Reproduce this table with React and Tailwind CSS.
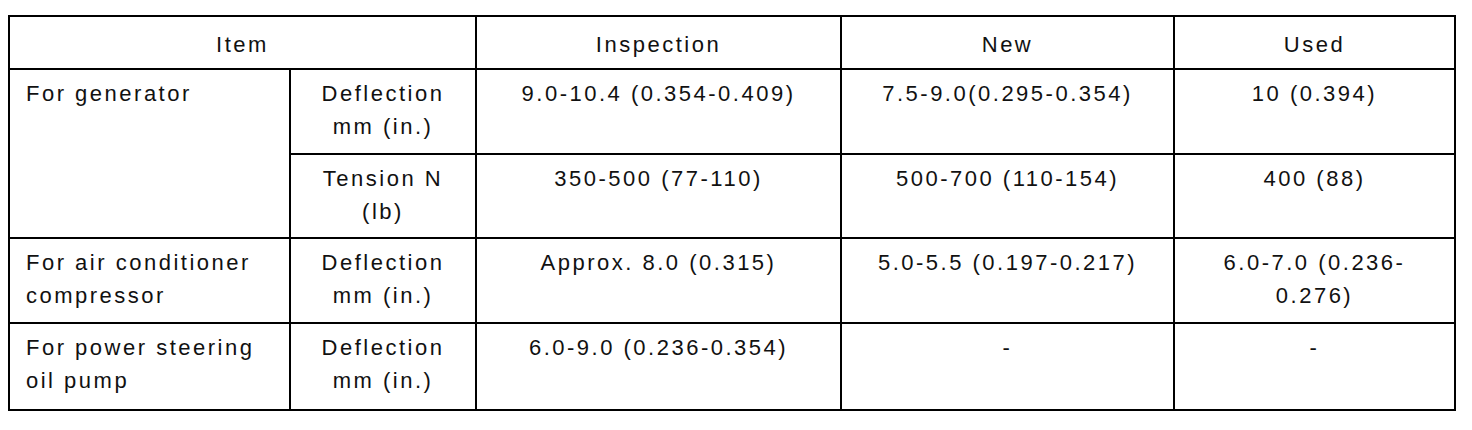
import React from "react";

const rows = [
  {
    item: "For generator",
    span: 2,
    sub: ["Deflection", "mm (in.)"],
    inspection: "9.0-10.4 (0.354-0.409)",
    fresh: "7.5-9.0(0.295-0.354)",
    used: ["10 (0.394)"],
    h: "h-[85px]",
  },
  {
    sub: ["Tension N", "(lb)"],
    inspection: "350-500 (77-110)",
    fresh: "500-700 (110-154)",
    used: ["400 (88)"],
    h: "h-[84px]",
  },
  {
    item: ["For air conditioner", "compressor"],
    sub: ["Deflection", "mm (in.)"],
    inspection: "Approx. 8.0 (0.315)",
    fresh: "5.0-5.5 (0.197-0.217)",
    used: ["6.0-7.0 (0.236-", "0.276)"],
    h: "h-[85px]",
  },
  {
    item: ["For power steering", "oil pump"],
    sub: ["Deflection", "mm (in.)"],
    inspection: "6.0-9.0 (0.236-0.354)",
    fresh: "-",
    used: ["-"],
    h: "h-[87px]",
  },
];

const lines = (arr) =>
  (Array.isArray(arr) ? arr : [arr]).map((t, i) => <div key={i}>{t}</div>);

const cell = "border-2 border-black align-top pt-[7px]";

export default function App() {
  return (
    <div className="w-[1472px] h-[430px] bg-white pl-[8px] pt-[15px] font-['Liberation_Sans',Arial,sans-serif] text-[22px] leading-[33px] tracking-[2.5px] text-[#111]">
      <table className="table-fixed w-[1446px] border-collapse border-2 border-black">
        <colgroup>
          <col className="w-[281px]" />
          <col className="w-[186px]" />
          <col className="w-[365px]" />
          <col className="w-[333px]" />
          <col className="w-[281px]" />
        </colgroup>
        <thead>
          <tr className="h-[53px]">
            <th colSpan={2} className="border-2 border-black align-top pt-[11px] font-normal text-center">Item</th>
            <th className="border-2 border-black align-top pt-[11px] font-normal text-center">Inspection</th>
            <th className="border-2 border-black align-top pt-[11px] font-normal text-center">New</th>
            <th className="border-2 border-black align-top pt-[11px] font-normal text-center">Used</th>
          </tr>
        </thead>
        <tbody>
          {rows.map((r, i) => (
            <tr key={i} className={r.h}>
              {r.item && (
                <td rowSpan={r.span || 1} className={`${cell} pl-[16px] text-left`}>
                  {lines(r.item)}
                </td>
              )}
              <td className={`${cell} text-center`}>{lines(r.sub)}</td>
              <td className={`${cell} text-center`}>{r.inspection}</td>
              <td className={`${cell} text-center`}>{r.fresh}</td>
              <td className={`${cell} text-center`}>{lines(r.used)}</td>
            </tr>
          ))}
        </tbody>
      </table>
    </div>
  );
}
